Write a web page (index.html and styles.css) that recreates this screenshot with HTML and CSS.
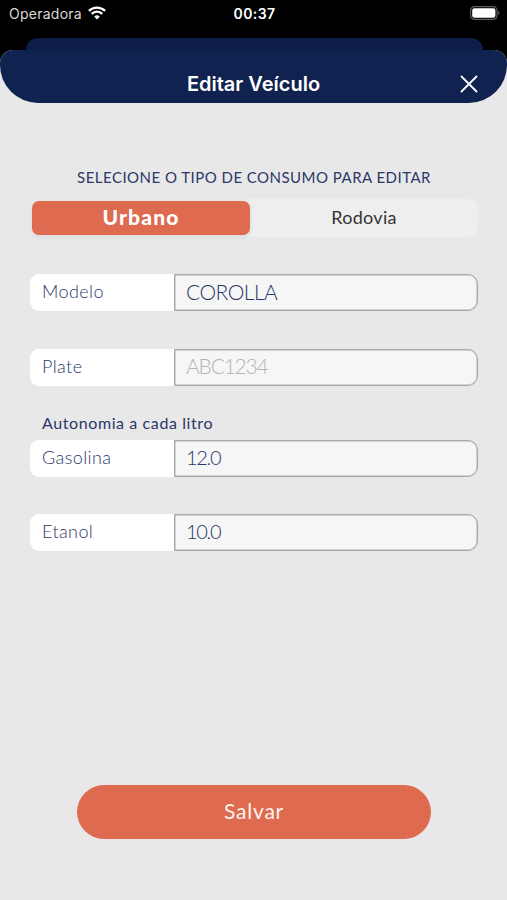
FILE: index.html
```
<!DOCTYPE html>
<html lang="pt-BR">
<head>
    <meta charset="utf-8">
    <meta name="viewport" content="width=device-width, initial-scale=1">
    <title>Editar Veículo</title>
    <link rel="stylesheet" href="styles.css">
</head>
<body>
    <div class="status-bar">
        <div class="carrier">
            <span class="carrier-name">Operadora</span>
            <svg class="wifi" width="18" height="14" viewBox="0 0 18 14" fill="none" stroke="#fff" stroke-width="2.2">
                <path d="M0.9 4.9a11.6 11.6 0 0 1 16.2 0"/>
                <path d="M3.7 7.9a7.5 7.5 0 0 1 10.6 0"/>
                <path d="M9 13.6L6.2 10.7a4 4 0 0 1 5.6 0z" fill="#fff" stroke="none"/>
            </svg>
        </div>
        <span class="clock">00:37</span>
        <svg class="battery" width="30" height="14" viewBox="0 0 30 14">
            <rect x="0.6" y="0.6" width="26.4" height="12.8" rx="4" fill="none" stroke="#5c5c5c" stroke-width="1.2"/>
            <rect x="2.2" y="2.2" width="23.2" height="9.6" rx="2.2" fill="#fff"/>
            <path d="M28.2 4.8c1.7.8 1.7 3.6 0 4.4z" fill="#5c5c5c"/>
        </svg>
    </div>

    <div class="back-card"></div>

    <div class="sheet">
        <div class="header">
            <h1 class="title">Editar Veículo</h1>
            <button class="close-btn" aria-label="Fechar">
                <svg width="18" height="18" viewBox="0 0 18 18" stroke="#fff" stroke-width="1.8" stroke-linecap="round">
                    <path d="M1.5 1.5l15 15M16.5 1.5l-15 15"/>
                </svg>
            </button>
        </div>

        <div class="content">
            <p class="caption">SELECIONE O TIPO DE CONSUMO PARA EDITAR</p>

            <div class="segmented">
                <button class="segment active">Urbano</button>
                <button class="segment">Rodovia</button>
            </div>

            <div class="field">
                <label class="field-label" for="modelo">Modelo</label>
                <input class="field-input" type="text" id="modelo" value="COROLLA">
            </div>

            <div class="field">
                <label class="field-label" for="plate">Plate</label>
                <input class="field-input" type="text" id="plate" placeholder="ABC1234">
            </div>

            <p class="section-label">Autonomia a cada litro</p>

            <div class="field">
                <label class="field-label" for="gasolina">Gasolina</label>
                <input class="field-input number" type="text" id="gasolina" value="12.0">
            </div>

            <div class="field">
                <label class="field-label" for="etanol">Etanol</label>
                <input class="field-input number" type="text" id="etanol" value="10.0">
            </div>
        </div>

        <button class="save-btn">Salvar</button>
    </div>
</body>
</html>
```
FILE: styles.css
```
* {
    box-sizing: border-box;
}

body {
    width: 507px;
    height: 900px;
    margin: 0;
    display: flex;
    flex-direction: column;
    background: #000;
    overflow: hidden;
    font-family: Lato, "Open Sans", sans-serif;
}

button,
input {
    font-family: inherit;
    border: none;
    padding: 0;
    margin: 0;
}

.status-bar {
    height: 38px;
    padding: 6px 7px 0 9px;
    display: grid;
    grid-template-columns: 1fr auto 1fr;
    align-items: start;
    color: #fff;
    font-family: Inter, sans-serif;
    font-size: 14px;
    line-height: 16px;
}

.carrier {
    display: flex;
    gap: 6px;
}

.carrier-name {
    color: #d8d8d8;
    letter-spacing: 0.25px;
}

.clock {
    font-weight: 600;
    letter-spacing: 0.4px;
}

.battery {
    justify-self: end;
}

.back-card {
    height: 12px;
    margin: 0 24px 0 26px;
    border-radius: 12px 12px 0 0;
    background: #0d1e48;
}

.sheet {
    flex: 1;
    display: flex;
    flex-direction: column;
    border-radius: 13px 13px 0 0;
    background: #e8e8e8;
    overflow: hidden;
}

.header {
    height: 53px;
    padding: 15px 29px 0;
    display: grid;
    grid-template-columns: 18px 1fr 18px;
    border-radius: 0 0 38px 38px;
    background: #10224f;
}

.title {
    grid-column: 2;
    margin: 0;
    color: #fff;
    font-family: Inter, sans-serif;
    font-size: 20px;
    font-weight: 600;
    line-height: 38px;
    text-align: center;
}

.close-btn {
    height: 38px;
    display: flex;
    align-items: center;
    background: none;
}

.content {
    padding: 62px 29px 0 30px;
    color: #2b3768;
}

.caption {
    margin: 0;
    font-size: 15px;
    line-height: 24px;
    letter-spacing: 0.47px;
    text-align: center;
}

.segmented {
    height: 38px;
    margin: 10px 0 37px;
    padding: 2px;
    display: flex;
    gap: 2px;
    border-radius: 9px;
    background: #eee;
}

.segment {
    flex: 1;
    padding-bottom: 2px;
    border-radius: 7px;
    background: none;
    color: #333;
    font-size: 18px;
    letter-spacing: 0.3px;
}

.segment.active {
    flex: 0 0 218px;
    padding-bottom: 3px;
    background: #de6a50;
    color: #fff;
    font-size: 21px;
    font-weight: 900;
    letter-spacing: 1.2px;
    box-shadow: 0 1px 4px rgba(0, 0, 0, 0.12);
}

.field {
    height: 37px;
    display: flex;
}

.field + .field {
    margin-top: 37.6px;
}

.field-label {
    width: 144px;
    padding-left: 12px;
    border-radius: 9px 0 0 9px;
    background: #fff;
    font-size: 18px;
    font-weight: 300;
    line-height: 35px;
    letter-spacing: 0.4px;
}

.field-input {
    flex: 1;
    min-width: 0;
    padding: 0 11px 3px;
    border: 1px solid #a8a8a8;
    border-radius: 0 10px 10px 0;
    background: #f6f6f6;
    box-shadow: inset 0 0 0 0.5px #b0b0b0;
    color: #2b3768;
    font-size: 21px;
    font-weight: 300;
    letter-spacing: -0.5px;
}

.field-input.number {
    font-size: 20px;
    letter-spacing: -1.3px;
}

.field-input::placeholder {
    color: #b4b4b4;
    letter-spacing: -1.2px;
}

.section-label {
    margin: 25px 12px 5px;
    font-size: 16px;
    line-height: 24px;
    letter-spacing: 0.6px;
}

.save-btn {
    width: 354px;
    height: 54px;
    margin: auto 76px 61px 77px;
    padding-bottom: 3px;
    border-radius: 27px;
    background: #de6a50;
    color: #fff3ee;
    font-size: 21px;
    letter-spacing: 0.8px;
}
```
